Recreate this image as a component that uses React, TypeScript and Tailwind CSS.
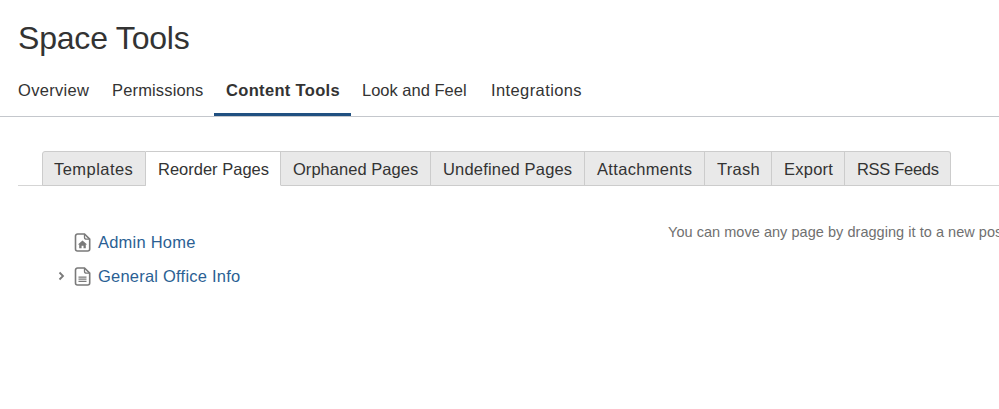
import React from 'react';

const mainTabs = [
  { label: 'Overview', cls: 'w-[94px] tracking-[0.3px]' },
  { label: 'Permissions', cls: 'w-[114px] tracking-[0.15px]' },
  { label: 'Content Tools', cls: 'w-[137px] tracking-[0.33px]' },
  { label: 'Look and Feel', cls: 'w-[129px] -ml-px tracking-[0px]' },
  { label: 'Integrations', cls: 'w-[116px] tracking-[0.4px]' },
];

const subTabs = [
  { label: 'Templates', cls: 'w-[104px] tracking-[0.45px]' },
  { label: 'Reorder Pages', cls: 'w-[135px] tracking-[0px]' },
  { label: 'Orphaned Pages', cls: 'w-[150px] tracking-[0.03px]' },
  { label: 'Undefined Pages', cls: 'w-[154px] tracking-[0.18px]' },
  { label: 'Attachments', cls: 'w-[120px] tracking-[0.33px]' },
  { label: 'Trash', cls: 'w-[67px] tracking-[0.25px]' },
  { label: 'Export', cls: 'w-[73px] tracking-[0.25px]' },
  { label: 'RSS Feeds', cls: 'w-[106px] tracking-[-0.3px]' },
];

const PageIcon: React.FC<{ kind: 'home' | 'doc' }> = ({ kind }) => (
  <svg width="17" height="19" viewBox="0 0 17 19" fill="none" className="shrink-0">
    <path d="M3.5 1h7L15.7 6.2v9.8a2 2 0 0 1-2 2H3.5a2 2 0 0 1-2-2V3a2 2 0 0 1 2-2z" stroke="#7a7a7a" strokeWidth="1.6" />
    <path d="M10.5 1v3.2a2 2 0 0 0 2 2h3.2" stroke="#7a7a7a" strokeWidth="1.3" />
    {kind === 'home' ? (
      <path d="M8.5 7.5l4.6 4h-1.3V15.2H9.5v-2.4H7.6v2.4H5.2v-3.7H3.9z" fill="#7a7a7a" />
    ) : (
      <path d="M4.5 9.5h8v1.2h-8zM4.5 11.6h8v1.2h-8zM4.5 13.7h8v1.2h-8z" fill="#7a7a7a" />
    )}
  </svg>
);

export default function App() {
  return (
    <div className="w-[999px] h-[409px] overflow-hidden bg-white font-['Liberation_Sans',sans-serif] text-[#333]">
      <h1 className="pl-[18px] pt-[18px] text-[32px] leading-[40px] tracking-[-0.2px] text-[#333]">Space Tools</h1>

      <nav className="flex pl-[6px] mt-[16px] h-[43px] border-b border-[#c4c7cc]">
        {mainTabs.map((t) => (
          <div
            key={t.label}
            className={`pl-3 h-[42px] pt-[4px] text-[16.5px] leading-[24px] whitespace-nowrap ${t.cls} ${
              t.label === 'Content Tools' ? 'font-bold border-b-[3px] border-[#205081]' : ''
            }`}
          >
            {t.label}
          </div>
        ))}
      </nav>

      <div className="ml-[18px] mt-[34px] h-[35px] pl-[24px] flex border-b border-[#d5d5d5]">
        {subTabs.map((t, i) => {
          const active = t.label === 'Reorder Pages';
          return (
            <div
              key={t.label}
              className={`h-[35px] pt-[5px] text-[16.5px] leading-[24px] whitespace-nowrap text-[#333] border-t border-r border-b border-t-[#ccc] border-r-[#ccc] ${t.cls} ${
                active ? 'bg-white border-b-white' : 'bg-[#e9e9e9] border-b-[#ccc]'
              } ${i === 0 ? 'pl-[11px] border-l border-l-[#ccc] rounded-tl-[3px]' : 'pl-3'} ${i === subTabs.length - 1 ? 'rounded-tr-[3px]' : ''}`}
            >
              {t.label}
            </div>
          );
        })}
      </div>

      <div className="flex mt-[27px]">
        <div className="w-[668px] shrink-0 pl-[57px] pt-[17px]">
          <div className="flex items-center h-[24px]">
            <span className="w-[17px]" />
            <PageIcon kind="home" />
            <span className="ml-[7px] text-[16.5px] leading-[24px] tracking-[0.22px] text-[#2b5f94]">Admin Home</span>
          </div>
          <div className="flex items-center h-[24px] mt-[10px]">
            <svg width="17" height="10" viewBox="0 0 17 10" fill="none">
              <path d="M2.5 1.5L6 5 2.5 8.5" stroke="#7a7a7a" strokeWidth="1.8" />
            </svg>
            <PageIcon kind="doc" />
            <span className="ml-[7px] text-[16.5px] leading-[24px] tracking-[0.22px] text-[#2b5f94]">General Office Info</span>
          </div>
        </div>
        <div className="whitespace-nowrap text-[14.5px] leading-[20px] pt-[9px] tracking-[0.04px] text-[#707070]">
          You can move any page by dragging it to a new position in the tree.
        </div>
      </div>
    </div>
  );
}
